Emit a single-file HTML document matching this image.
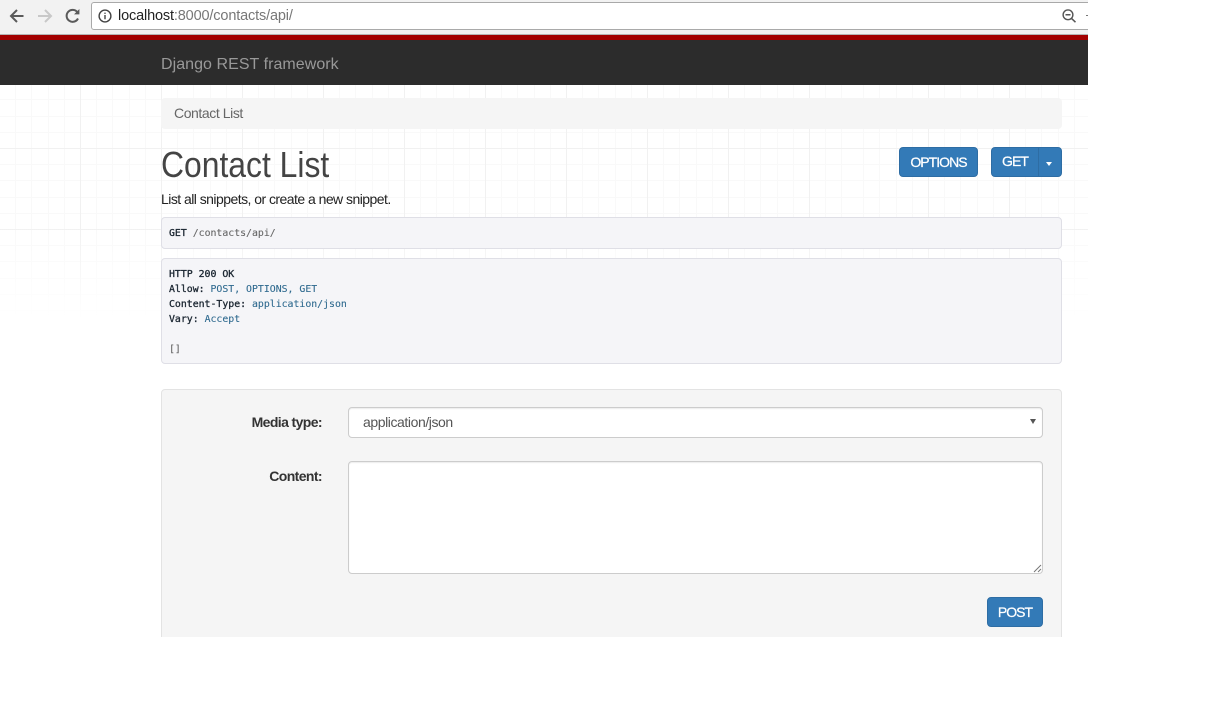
<!DOCTYPE html>
<html><head><meta charset="utf-8"><title>Contact List</title>
<style>
html,body{margin:0;padding:0;background:#fff;width:1213px;height:706px;overflow:hidden}
body{font-family:"Liberation Sans",Arial,sans-serif;position:relative;color:#333}
.a{position:absolute;white-space:nowrap}
.box{position:absolute;box-sizing:border-box}
.btn{position:absolute;box-sizing:border-box;background:#337ab7;border:1px solid #2e6da4;color:#fff;font-size:14px;line-height:28px;text-align:center;letter-spacing:-.95px;-webkit-text-stroke:.25px #fff}
.pre{position:absolute;box-sizing:border-box;background:#f5f5f8;border:1px solid #dfdfe6;border-radius:4px}
.m{position:absolute;left:169px;font-family:"DejaVu Sans Mono","Liberation Mono",monospace;font-size:9.85px;line-height:15px;white-space:pre;color:#333}
.k{color:#1a2530;-webkit-text-stroke:.3px #1a2530}
.v{color:#2f6a8f;-webkit-text-stroke:.1px #2f6a8f}
.g{color:#666;-webkit-text-stroke:.1px #666}
.lb{position:absolute;right:891px;font-weight:bold;font-size:14px;color:#333;letter-spacing:-.6px;white-space:nowrap}
</style></head>
<body>
<!-- grid background -->
<svg class="a" style="left:0;top:85px" width="1088" height="552" viewBox="0 85 1088 552">
<defs>
<pattern id="p1" patternUnits="userSpaceOnUse" x="80" y="148" width="81" height="81">
<g shape-rendering="crispEdges">
<rect x="16" y="0" width="1" height="81" fill="#f9f9f9"/><rect x="32" y="0" width="1" height="81" fill="#f9f9f9"/><rect x="49" y="0" width="1" height="81" fill="#f9f9f9"/><rect x="65" y="0" width="1" height="81" fill="#f9f9f9"/>
<rect x="0" y="16" width="81" height="1" fill="#f9f9f9"/><rect x="0" y="32" width="81" height="1" fill="#f9f9f9"/><rect x="0" y="49" width="81" height="1" fill="#f9f9f9"/><rect x="0" y="65" width="81" height="1" fill="#f9f9f9"/>
<rect x="0" y="0" width="1" height="81" fill="#f1f1f1"/><rect x="0" y="0" width="81" height="1" fill="#f1f1f1"/>
</g></pattern>
<pattern id="p2" patternUnits="userSpaceOnUse" x="928" y="148" width="81" height="81">
<g shape-rendering="crispEdges">
<rect x="16" y="0" width="1" height="81" fill="#f9f9f9"/><rect x="32" y="0" width="1" height="81" fill="#f9f9f9"/><rect x="49" y="0" width="1" height="81" fill="#f9f9f9"/><rect x="65" y="0" width="1" height="81" fill="#f9f9f9"/>
<rect x="0" y="16" width="81" height="1" fill="#f9f9f9"/><rect x="0" y="32" width="81" height="1" fill="#f9f9f9"/><rect x="0" y="49" width="81" height="1" fill="#f9f9f9"/><rect x="0" y="65" width="81" height="1" fill="#f9f9f9"/>
<rect x="0" y="0" width="1" height="81" fill="#f1f1f1"/><rect x="0" y="0" width="81" height="1" fill="#f1f1f1"/>
</g></pattern>
<linearGradient id="fade" x1="0" y1="85" x2="0" y2="320" gradientUnits="userSpaceOnUse"><stop offset="0.6" stop-color="#fff" stop-opacity="0"/><stop offset="1" stop-color="#fff" stop-opacity="1"/></linearGradient>
</defs>
<rect x="0" y="85" width="848" height="240" fill="url(#p1)"/>
<rect x="848" y="85" width="240" height="240" fill="url(#p2)"/>
<rect x="0" y="85" width="1088" height="240" fill="url(#fade)"/>
</svg>

<!-- browser toolbar -->
<div class="box" style="left:0;top:0;width:1088px;height:35px;background:#f2f2f2;border-bottom:1px solid #b5b5b5"></div>
<svg class="a" style="left:0;top:0" width="90" height="34" viewBox="0 0 90 34" fill="none">
<path d="M23.5 16H11.5M17 10 11 16l6 6" stroke="#5a5a5a" stroke-width="2"/>
<path d="M38 16h12M45 10 51 16l-6 6" stroke="#c8c8c8" stroke-width="2"/>
<path d="M78 18.5a6 6 0 1 1-.6-6.3" stroke="#5a5a5a" stroke-width="2"/>
<path d="M79.4 9v5.4H74z" fill="#5a5a5a"/>
</svg>
<div class="box" style="left:91px;top:2px;width:1000px;height:28px;background:#fff;border:1px solid #a9a9a9;border-radius:3px"></div>
<svg class="a" style="left:97px;top:8px" width="16" height="16" viewBox="0 0 16 16" fill="none">
<circle cx="8" cy="8" r="5.9" stroke="#444" stroke-width="1.4"/>
<path d="M8 7v4.2M8 4.6v1.3" stroke="#444" stroke-width="1.4"/>
</svg>
<div class="a" style="left:118px;top:8px;font-size:14.5px;line-height:17px;color:#777;letter-spacing:-.15px"><span style="color:#222">localhost</span>:8000/contacts/api/</div>
<svg class="a" style="left:1060px;top:7px" width="18" height="18" viewBox="0 0 18 18" fill="none">
<circle cx="8" cy="7.8" r="4.9" stroke="#555" stroke-width="1.4"/>
<path d="M5.5 7.8h5M11.5 11.4l4 3.8" stroke="#555" stroke-width="1.5"/>
</svg>
<div class="box" style="left:1086px;top:15px;width:2px;height:1px;background:#777"></div>
<div class="box" style="left:1088px;top:0;width:125px;height:36px;background:#fff"></div>

<!-- red bar + navbar -->
<div class="box" style="left:0;top:35px;width:1088px;height:5px;background:#a30000"></div>
<div class="box" style="left:0;top:40px;width:1088px;height:45px;background:#2c2c2c"></div>
<div class="a" style="left:161px;top:56px;font-size:16px;line-height:18px;color:#999;letter-spacing:.05px">Django REST framework</div>

<!-- breadcrumb -->
<div class="box" style="left:161px;top:98px;width:901px;height:31px;background:#f5f5f5;border-radius:4px"></div>
<div class="a" style="left:174px;top:105px;font-size:14px;line-height:17px;color:#666;letter-spacing:-.42px">Contact List</div>

<!-- heading -->
<div class="a" style="left:160.5px;top:145px;font-size:36px;line-height:40px;color:#444;transform:scaleX(.885);transform-origin:left top">Contact List</div>
<div class="a" style="left:161px;top:191px;font-size:14px;line-height:17px;color:#222;letter-spacing:-.54px">List all snippets, or create a new snippet.</div>

<!-- buttons -->
<div class="btn" style="left:899px;top:147px;width:79px;height:30px;border-radius:4px">OPTIONS</div>
<div class="btn" style="left:991px;top:147px;width:48px;height:30px;border-radius:4px 0 0 4px;line-height:26px">GET</div>
<div class="btn" style="left:1038px;top:147px;width:24px;height:30px;border-radius:0 4px 4px 0"></div>
<div class="box" style="left:1046px;top:162px;width:0;height:0;border-left:3.5px solid transparent;border-right:3.5px solid transparent;border-top:4px solid #fff"></div>

<!-- request -->
<div class="pre" style="left:161px;top:217px;width:901px;height:32px"></div>
<div class="m" style="top:226px"><span class="k">GET</span> <span class="g">/contacts/api/</span></div>

<!-- response -->
<div class="pre" style="left:161px;top:258px;width:901px;height:106px"></div>
<div class="m" style="top:267px"><span class="k">HTTP 200 OK</span>
<span class="k">Allow:</span> <span class="v">POST, OPTIONS, GET</span>
<span class="k">Content-Type:</span> <span class="v">application/json</span>
<span class="k">Vary:</span> <span class="v">Accept</span>

<span class="g">[]</span></div>

<!-- form -->
<div class="box" style="left:161px;top:389px;width:901px;height:260px;background:#f5f5f5;border:1px solid #e3e3e3;border-radius:4px"></div>
<div class="lb" style="top:414px">Media type:</div>
<div class="box" style="left:348px;top:407px;width:695px;height:31px;background:#fff;border:1px solid #ccc;border-radius:4px;box-shadow:inset 0 1px 1px rgba(0,0,0,.075)"></div>
<div class="a" style="left:363px;top:414px;font-size:14px;line-height:17px;color:#555;letter-spacing:-.42px">application/json</div>
<div class="box" style="left:1030px;top:419px;width:0;height:0;border-left:3px solid transparent;border-right:3px solid transparent;border-top:5px solid #555"></div>
<div class="lb" style="top:468px">Content:</div>
<div class="box" style="left:348px;top:461px;width:695px;height:113px;background:#fff;border:1px solid #ccc;border-radius:4px;box-shadow:inset 0 1px 1px rgba(0,0,0,.075)"></div>
<svg class="a" style="left:1033px;top:564px" width="9" height="9" viewBox="0 0 9 9" fill="none"><path d="M1 8 8 1M5 8 8 5" stroke="#777" stroke-width="1"/></svg>
<div class="btn" style="left:987px;top:597px;width:56px;height:30px;border-radius:4px">POST</div>

<!-- page cut -->
<div class="box" style="left:0;top:637px;width:1213px;height:69px;background:#fff"></div>
</body></html>
